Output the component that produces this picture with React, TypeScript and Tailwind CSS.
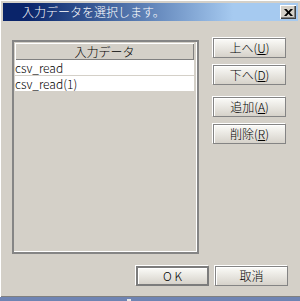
import React from "react";

const font = { fontFamily: '"Noto Sans CJK JP", "Liberation Sans", sans-serif' };

function Btn({ children, def = false }: { children: React.ReactNode; def?: boolean }) {
  return (
    <div
      className={
        "w-[73px] h-[20px] flex items-center justify-center text-[12px] leading-none font-light text-black bg-gradient-to-b from-[#fbfbf8] to-[#d6d2ca] shadow-[inset_1px_1px_0_#ffffff,-1px_-1px_0_#ffffff] " +
        (def ? "border-2 border-[#7c7c7c]" : "border border-[#848484]")
      }
    >
      {children}
    </div>
  );
}

export default function App() {
  return (
    <div className="w-[300px] h-[301px] bg-[#6f84b3] overflow-hidden" style={font}>
      <div className="w-[300px] h-[297px] bg-[#d4d0c8] pt-[3px] pl-[3px] pr-[2px] flex flex-col shadow-[inset_1px_1px_0_#ffffff,inset_0_-1px_0_#808080]">
        {/* タイトルバー */}
        <div className="h-[18px] flex items-center justify-between bg-gradient-to-r from-[#0a246a] from-[8%] to-[#a6caf0] to-[78%] pl-[19px] pr-[2px]">
          <span className="text-white text-[12px] leading-none font-light">入力データを選択します。</span>
          <div className="w-[16px] h-[14px] bg-[#d4d0c8] flex items-center justify-center shadow-[inset_1px_1px_0_#ffffff,inset_-1px_-1px_0_#404040,inset_-2px_-2px_0_#808080]">
            <svg width="9" height="7" viewBox="0 0 9 7">
              <path d="M0 0h2.5l2 2.2 2-2.2H9L5.8 3.5 9 7H6.5l-2-2.2-2 2.2H0l3.2-3.5z" fill="#000" />
            </svg>
          </div>
        </div>

        {/* 本体 */}
        <div className="flex flex-col pl-[9px] pr-[10px] pt-[19px]">
          <div className="flex">
            <div className="w-[187px] h-[214px] border-2 border-[#858585] shadow-[inset_-1px_-1px_0_#ffffff] p-px pr-[3px] flex flex-col font-light">
              <div className="h-[17px] flex items-center justify-center text-[12px] leading-none text-black bg-[#d4d0c8] shadow-[inset_1px_1px_0_#ffffff,inset_-1px_-1px_0_#808080]">
                入力データ
              </div>
              <div className="h-[15px] bg-white flex items-center text-[12px] leading-none text-black">csv_read</div>
              <div className="h-px bg-[#d4d0c8]" />
              <div className="h-[15px] bg-white flex items-center text-[12px] leading-none text-black">csv_read(1)</div>
            </div>

            <div className="ml-[14px] mt-[-2px] flex flex-col">
              <Btn>
                上へ(<span className="underline">U</span>)
              </Btn>
              <div className="mt-[7px]">
                <Btn>
                  下へ(<span className="underline">D</span>)
                </Btn>
              </div>
              <div className="mt-[12px]">
                <Btn>
                  追加(<span className="underline">A</span>)
                </Btn>
              </div>
              <div className="mt-[7px]">
                <Btn>
                  削除(<span className="underline">R</span>)
                </Btn>
              </div>
            </div>
          </div>

          <div className="flex justify-end gap-[6px] mt-[12px]">
            <Btn def>
              <span className="tracking-[3px] pl-[3px]">OK</span>
            </Btn>
            <Btn>取消</Btn>
          </div>
        </div>
      </div>
      <div className="flex pl-[127px] pt-[2px]">
        <div className="w-[4px] h-[2px] bg-[#e8e8e8]" />
      </div>
    </div>
  );
}
